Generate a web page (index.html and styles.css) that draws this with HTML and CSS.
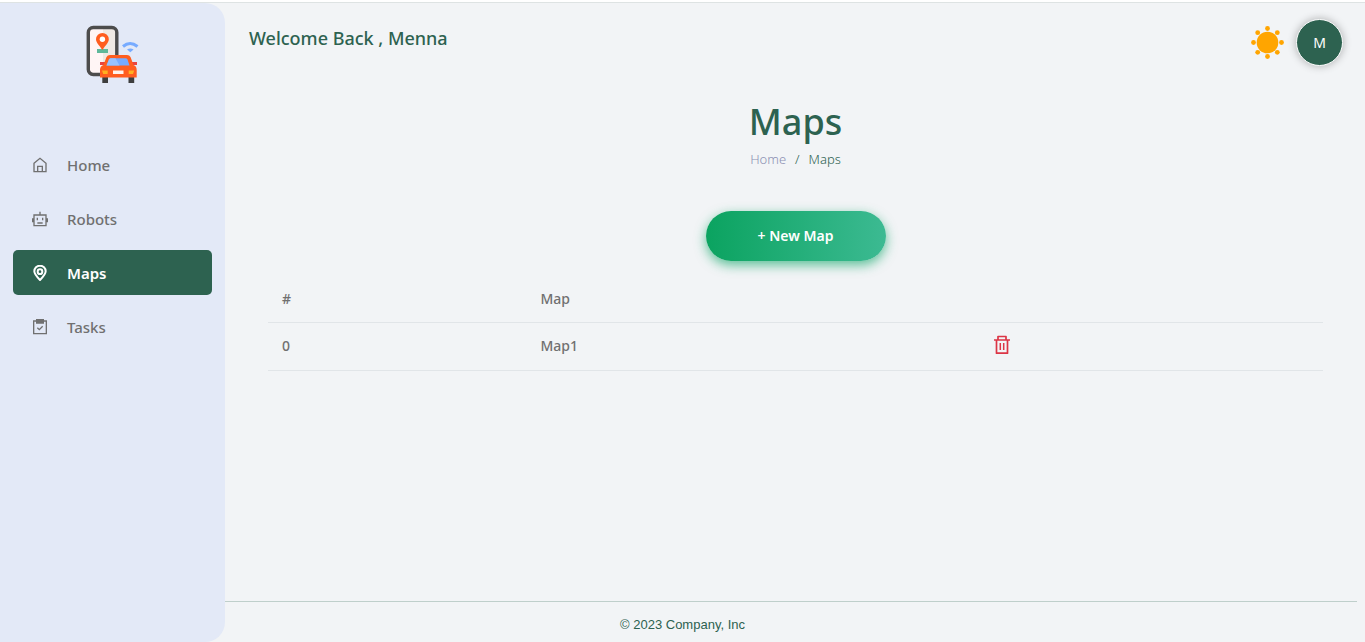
FILE: index.html
```html
<!DOCTYPE html>
<html lang="en">
<head>
<meta charset="utf-8">
<meta name="viewport" content="width=device-width, initial-scale=1">
<title>Maps</title>
<link rel="stylesheet" href="styles.css">
</head>
<body>
<div class="app">
  <aside class="sidebar">
    <a class="logo" href="#" aria-label="Dashboard">
      <svg width="54" height="60" viewBox="0 0 54 60">
        <rect x="2.300" y="2.500" width="28.500" height="47" rx="5" fill="#fff5f5"/>
        <path d="M17 3h9a4 4 0 0 1 4 4v42H17z" fill="#efe9e4"/>
        <rect x="2.300" y="2.500" width="28.500" height="47" rx="5" fill="none" stroke="#4c4c4c" stroke-width="3.400"/>
        <rect x="11" y="24" width="11" height="4" fill="#5fb89b"/>
        <path d="M16.400 25C13 20 10 17.500 10 14.300a6.400 6.400 0 0 1 12.800 0c0 3.200-3 5.700-6.400 10.700z" fill="#ff5d1f"/>
        <circle cx="16.400" cy="14.300" r="2.700" fill="#fff"/>
        <path d="M37 21.500q7-6 14.500 0" fill="none" stroke="#77abff" stroke-width="3"/>
        <path d="M41 24.500q3.300-2.200 6.600 0L44.300 27.300z" fill="#77abff"/>
        <path d="M16.300 51H22v7h-5.700zM42.500 51h5.700v7h-5.700z" fill="#3e3e3e"/>
        <path d="M14 37h5v3h-5zM45 37h6v3h-6z" fill="#e9443f"/>
        <path d="M14 52.500V45q0-4 3.500-5l3-8q1-2 3.500-2h17q2.500 0 3.500 2l3 8q3.200 1 3.200 5v7.500z" fill="#ff5d1f"/>
        <path d="M20.500 40.500l2.500-6q.6-1.300 2-1.300h14.500q1.400 0 2 1.300l2 6z" fill="#77abff"/>
        <path d="M20.500 40.500l2.500-6q.6-1.300 2-1.300h4.500l4 7.300z" fill="#98c2ff"/>
        <path d="M16 45.500h5.700V49h-4.500zM42.700 45.500h5.500L47 49h-4.300z" fill="#ffb020"/>
        <rect x="27" y="45.500" width="10.500" height="3.500" fill="#fff3ec"/>
      </svg>
    </a>
    <nav class="menu" aria-label="Main">
      <a class="menu-item" href="#">
        <svg class="menu-icon" viewBox="0 0 24 24"><path d="M3 9.500 12 2l9 7.500V22H3z"/><path d="M8.500 22v-8h7v8"/></svg>
        Home
      </a>
      <a class="menu-item" href="#">
        <svg class="menu-icon" viewBox="0 0 24 24"><path d="M3 6h18v16H3zM12 1v5M1 11v6M23 11v6M8 10v4M16 10v4M8 18h8"/></svg>
        Robots
      </a>
      <a class="menu-item active" href="#" aria-current="page">
        <svg class="menu-icon" viewBox="0 0 24 24"><path d="M12 22.500C7 17.500 3.500 14 3.500 9.500a8.500 8.500 0 0 1 17 0C20.500 14 17 17.500 12 22.500z"/><circle cx="12" cy="10" r="3.500"/></svg>
        Maps
      </a>
      <a class="menu-item" href="#">
        <svg class="menu-icon" viewBox="0 0 24 24"><path d="M2.500 3h19v19h-19z"/><path class="solid" d="M7 1h10v5H7z"/><path d="m8 13 3 3 5-5"/></svg>
        Tasks
      </a>
    </nav>
  </aside>

  <header class="topbar">
    <p class="welcome">Welcome Back , Menna</p>
    <div class="actions">
      <button class="theme" type="button" aria-label="Toggle theme">
        <svg width="34" height="34" viewBox="0 0 34 34" fill="#ffa500">
          <circle cx="17.500" cy="16.500" r="10.800"/>
          <circle cx="17.500" cy="2.500" r="2.400"/><circle cx="17.500" cy="30.500" r="2.400"/>
          <circle cx="3.500" cy="16.500" r="2.400"/><circle cx="31.500" cy="16.500" r="2.400"/>
          <circle cx="7.700" cy="6.700" r="2.400"/><circle cx="27.300" cy="6.700" r="2.400"/>
          <circle cx="7.700" cy="26.300" r="2.400"/><circle cx="27.300" cy="26.300" r="2.400"/>
        </svg>
      </button>
      <button class="avatar" type="button">M</button>
    </div>
  </header>

  <main class="content">
    <h1 class="title">Maps</h1>
    <nav class="crumbs" aria-label="Breadcrumb">
      <a class="crumb-link" href="#">Home</a>
      <span>/</span>
      <span>Maps</span>
    </nav>
    <button class="new-map" type="button">+ New Map</button>
    <table class="maps">
      <thead>
        <tr><th class="col-id" scope="col">#</th><th class="col-name" scope="col">Map</th><td></td></tr>
      </thead>
      <tbody>
        <tr>
          <td>0</td>
          <td>Map1</td>
          <td>
            <button class="delete" type="button" aria-label="Delete Map1">
              <svg width="16" height="20" viewBox="0 0 16 20" fill="none" stroke="#dc3545" stroke-width="1.700" stroke-linejoin="round"><path d="M0 5h16M4 5V1.500h8V5M2.500 5v13.200h11V5"/><path d="M6.300 8v7M9.700 8v7" stroke-width="1.500"/></svg>
            </button>
          </td>
        </tr>
      </tbody>
    </table>
  </main>

  <hr class="divider">
  <footer class="footer">© 2023 Company, Inc</footer>
</div>
</body>
</html>
```

FILE: styles.css
```css
* {
  box-sizing: border-box;
}

body {
  margin: 0;
  padding-top: 2px;
  background: #fff;
  color: #2d6250;
  font-family: "Noto Sans", "Open Sans", sans-serif;
}

button {
  padding: 0;
  border: 0;
  background: none;
  font-family: inherit;
  cursor: pointer;
}

a {
  text-decoration: none;
}

.app {
  display: grid;
  grid-template-columns: 225px 1fr;
  grid-template-rows: auto 1fr auto auto;
  min-height: calc(100vh - 2px);
  border-top: 1px solid #dee3e3;
  background: #f2f4f6;
}

.sidebar {
  grid-column: 1;
  grid-row: 1 / -1;
  padding: 22px 13px;
  border-radius: 0 20px 20px 0;
  background: #e3e9f7;
}

.logo {
  display: flex;
  justify-content: center;
}

.menu {
  display: grid;
  gap: 9px;
  margin-top: 57px;
}

.menu-item {
  display: flex;
  align-items: center;
  gap: 19px;
  height: 45px;
  padding: 0 19px;
  border-radius: 5px;
  color: #707070;
  font-size: 15px;
  font-weight: 500;
}

.menu-item.active {
  background: #2d6250;
  color: #fff;
  font-weight: 600;
}

.menu-icon {
  width: 16px;
  height: 16px;
  fill: none;
  stroke: currentColor;
  stroke-width: 2;
}

.menu-item.active .menu-icon {
  stroke-width: 3;
}

.menu-icon .solid {
  fill: currentColor;
}

.topbar {
  grid-column: 2;
  grid-row: 1;
  display: flex;
  justify-content: space-between;
  padding: 16px 22px 0 24px;
}

.welcome {
  margin: 7px 0 0;
  font-size: 18px;
  font-weight: 500;
  line-height: 24px;
}

.actions {
  display: flex;
  align-items: center;
  gap: 12px;
}

.theme {
  display: flex;
}

.avatar {
  width: 47px;
  height: 47px;
  border: 1px solid #fff;
  border-radius: 50%;
  background: #2d6250;
  box-shadow: 0 0 8px rgba(0, 0, 0, 0.3);
  color: #fff;
  font-size: 14px;
}

.content {
  grid-column: 2;
  grid-row: 2;
  display: flex;
  flex-direction: column;
  align-items: center;
  padding: 32px 42px 0 43px;
}

.title {
  margin: 0;
  font-size: 36px;
  font-weight: 500;
  line-height: 48px;
}

.crumbs {
  display: flex;
  gap: 9px;
  margin-top: 4px;
  font-size: 13px;
  font-weight: 300;
  line-height: 18px;
}

.crumb-link {
  color: #8b90b3;
}

.new-map {
  width: 180px;
  height: 50px;
  margin-top: 43px;
  padding-bottom: 2px;
  border-radius: 25px;
  background: linear-gradient(to right, #0ba360, #3cba92);
  box-shadow: 0 4px 12px rgba(23, 168, 108, 0.7);
  color: #fff;
  font-size: 14px;
  font-weight: 600;
}

.maps {
  width: 100%;
  margin-top: 16px;
  border-collapse: collapse;
  table-layout: fixed;
  color: #707070;
  font-size: 14px;
  font-weight: 500;
  line-height: 20px;
}

.maps th,
.maps td {
  height: 45px;
  padding: 0 14px;
  border-bottom: 1px solid #e1e5e8;
  font-weight: 500;
  text-align: left;
}

.maps tbody td {
  height: 48px;
}

.col-id {
  width: 24.5%;
}

.col-name {
  width: 43%;
}

.delete {
  display: flex;
  padding-bottom: 2px;
}

.divider {
  grid-column: 2;
  grid-row: 3;
  width: calc(100% - 8px);
  margin: 0;
  border: 0;
  border-top: 1px solid #bfcfcb;
}

.footer {
  grid-column: 1 / -1;
  grid-row: 4;
  padding: 14px 0 8px;
  font-family: "Liberation Sans", Roboto, sans-serif;
  font-size: 13px;
  line-height: 18px;
  text-align: center;
}
```
